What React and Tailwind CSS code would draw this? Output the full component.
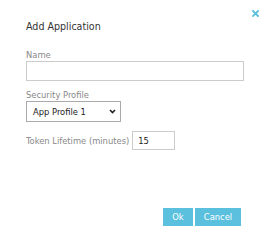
import React from 'react';

const font = { fontFamily: '"DejaVu Sans Condensed", "DejaVu Sans", sans-serif' };

export default function App() {
  return (
    <div
      className="relative w-[266px] h-[243px] bg-white pl-[26px] pr-[22px] pt-[19px] text-[9.3px] [font-stretch:condensed]"
      style={font}
    >
      {/* close */}
      <button className="absolute right-[7px] top-[9px] w-[8px] h-[8px] flex items-center justify-center">
        <svg width="7" height="7" viewBox="0 0 7 7">
          <path d="M1 1L6 6M6 1L1 6" stroke="#5bc0de" strokeWidth="1.8" strokeLinecap="square" />
        </svg>
      </button>

      <h2 className="text-[10.6px] leading-[14px] text-[#333] font-normal">Add Application</h2>

      {/* Name */}
      <div className="mt-[16px] leading-[12px] text-[#888]">Name</div>
      <div className="w-[218px] h-[20px] border border-[#ccc] bg-white" />

      {/* Security profile */}
      <div className="mt-[8px] leading-[12px] text-[#888]">Security Profile</div>
      <div className="w-[95px] h-[21px] border border-[#aaa] bg-white flex items-center pl-[6px] pr-[4px] text-[#222]">
        <span className="flex-1">App Profile 1</span>
        <svg width="7" height="5" viewBox="0 0 7 5">
          <path d="M1 1L3.5 3.5L6 1" fill="none" stroke="#222" strokeWidth="1.6" />
        </svg>
      </div>

      {/* Token lifetime */}
      <div className="mt-[9px] flex items-center gap-[3px]">
        <span className="text-[#888]">Token Lifetime (minutes)</span>
        <div className="w-[43px] h-[19px] border border-[#ccc] flex items-center pl-[5px] text-[#222]">15</div>
      </div>

      {/* Actions */}
      <div className="mt-[58px] flex justify-end gap-[2px] pr-[3px]">
        <button className="w-[30px] h-[18px] bg-[#5bc0de] text-white leading-[18px]">Ok</button>
        <button className="w-[46px] h-[18px] bg-[#5bc0de] text-white leading-[18px]">Cancel</button>
      </div>
    </div>
  );
}
